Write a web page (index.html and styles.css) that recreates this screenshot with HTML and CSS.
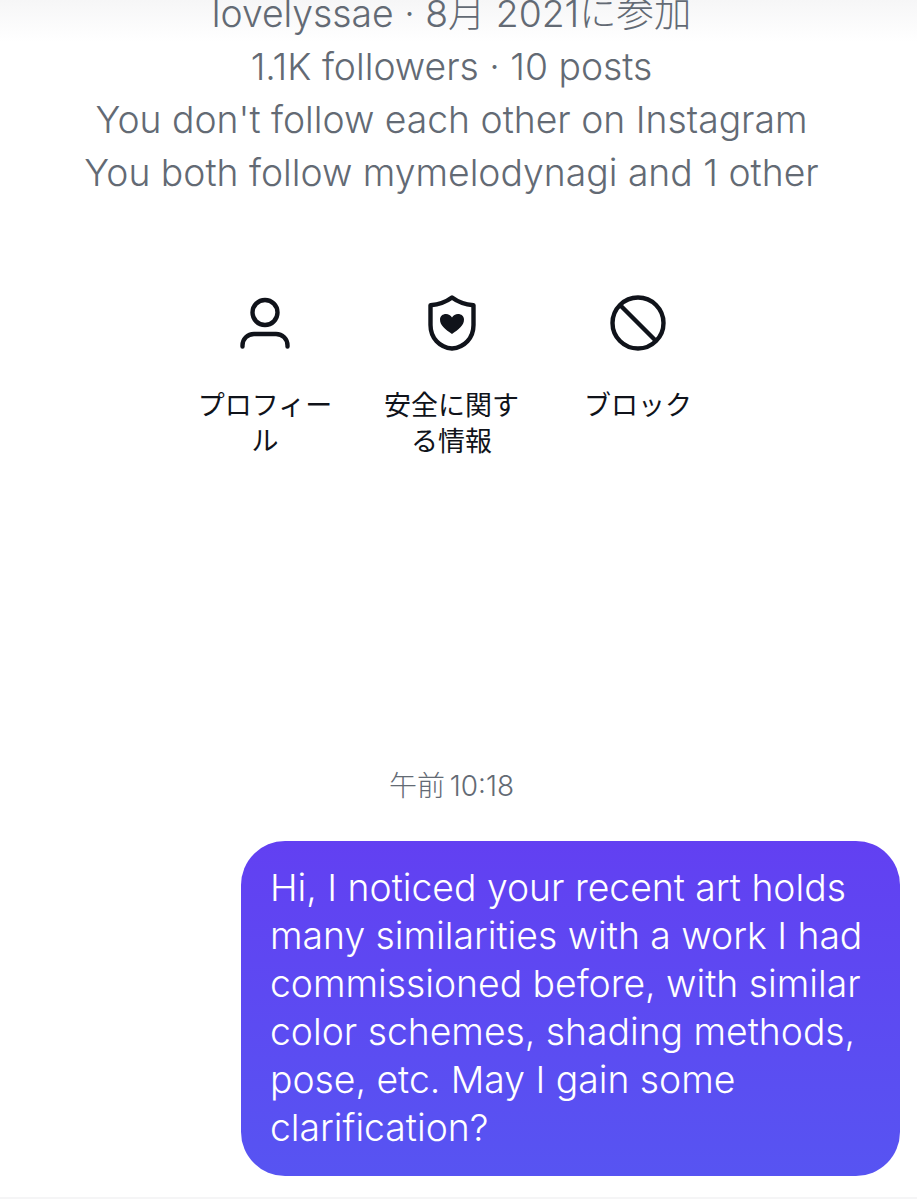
FILE: index.html
```html
<!DOCTYPE html>
<html lang="ja">
<head>
    <meta charset="UTF-8">
    <title>Instagram DM</title>
    <meta name="viewport" content="width=device-width, initial-scale=1.0">
    <link rel="stylesheet" href="styles.css">
</head>
<body>

    <div class="top-fade"></div>

    <div class="content">
        <div class="profile-info">
            <p>lovelyssae · 8月 2021に参加</p>
            <p>1.1K followers · 10 posts</p>
            <p>You don't follow each other on Instagram</p>
            <p>You both follow mymelodynagi and 1 other</p>
        </div>

        <div class="actions">
            <div class="action">
                <svg class="action-icon" viewBox="0 0 56 56" fill="none" stroke="#10131a" stroke-width="4.4" stroke-linecap="round">
                    <circle cx="28" cy="17.5" r="12.5"/>
                    <path d="M5.500 51.500v-1c0-6.500 5-11.500 11.500-11.500h22c6.500 0 11.500 5 11.500 11.500v1"/>
                </svg>
                <span>プロフィール</span>
            </div>
            <div class="action">
                <svg class="action-icon" viewBox="0 0 56 56" fill="none" stroke="#10131a" stroke-width="4.4" stroke-linejoin="round">
                    <path d="M28 2.500c6 4.500 13 7 21.500 7.800v19.700c0 13-9 22.500-21.500 23.500c-12.500-1-21.500-10.500-21.500-23.500v-19.700c8.500-.8 15.500-3.300 21.500-7.800z"/>
                    <path fill="#10131a" stroke="none" d="M28 39c-6.500-4.500-12-8.500-12-14.500c0-3.300 2.700-5.500 6-5.500c2.500 0 4.700 1.300 6 3.500c1.300-2.200 3.500-3.500 6-3.500c3.300 0 6 2.200 6 5.500c0 6-5.500 10-12 14.500z"/>
                </svg>
                <span>安全に関する情報</span>
            </div>
            <div class="action">
                <svg class="action-icon" viewBox="0 0 56 56" fill="none" stroke="#10131a" stroke-width="4.4">
                    <circle cx="28" cy="28" r="25.500"/>
                    <path d="M10 10l36 36"/>
                </svg>
                <span>ブロック</span>
            </div>
        </div>

        <div class="time">午前 10:18</div>
    </div>

    <div class="message-row">
        <div class="bubble">Hi, I noticed your recent art holds many similarities with a work I had commissioned before, with similar color schemes, shading methods, pose, etc. May I gain some clarification?</div>
    </div>

    <div class="bottom-line"></div>

</body>
</html>
```

FILE: styles.css
```css
* {
    margin: 0;
    padding: 0;
    box-sizing: border-box;
}

html, body {
    height: 1199px;
    overflow: hidden;
}

body {
    font-family: Inter, 'Noto Sans CJK JP', sans-serif;
    background-color: #fff;
    color: #10131a;
    position: relative;
}

/* blurred header edge above the profile text */
.top-fade {
    position: absolute;
    top: 0;
    left: 0;
    right: 0;
    height: 42px;
    background: linear-gradient(#f6f6f7, #fff);
}

.content {
    position: relative;
    width: 903px;
}

.profile-info {
    margin-top: -13px;
    text-align: center;
    font-size: 37.300px;
    font-weight: 300;
    line-height: 53px;
    color: #636a74;
}

.actions {
    display: flex;
    justify-content: center;
    margin-top: 96px;
}

.action {
    width: 186.500px;
    display: flex;
    flex-direction: column;
    align-items: center;
    text-align: center;
    font-size: 27px;
    line-height: 35.500px;
}

.action span {
    width: 138px;
    margin-top: 37px;
}

.action-icon {
    width: 56px;
    height: 56px;
}

.time {
    margin-top: 309px;
    text-align: center;
    font-size: 28px;
    font-weight: 300;
    word-spacing: -3px;
    line-height: 36px;
    color: #636a74;
}

.message-row {
    display: flex;
    justify-content: flex-end;
    margin-top: 37px;
    padding-right: 17px;
}

.bubble {
    width: 659px;
    height: 335px;
    padding: 23px 29px;
    border-radius: 44px;
    background: linear-gradient(#6240f2, #5754f2);
    color: #fff;
    font-size: 37.300px;
    font-weight: 300;
    line-height: 48px;
}

.bottom-line {
    margin-top: 21px;
    height: 2px;
    background-color: #f5f5f6;
}
```
